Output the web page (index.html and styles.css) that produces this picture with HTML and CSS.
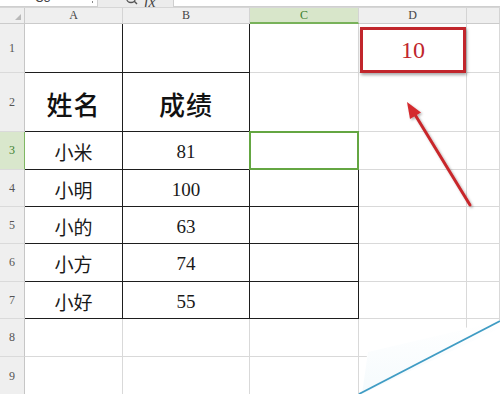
FILE: index.html
```html
<!DOCTYPE html>
<html lang="zh">
<head>
<meta charset="utf-8">
<link rel="stylesheet" href="styles.css">
</head>
<body>
<div class="page">
  <div class="toolbar">
    <div class="namebox"><span class="nb-text">C3</span><span class="nb-arrow"></span></div>
    <div class="fxarea">
      <svg class="mag" width="12" height="8" viewBox="0 0 12 8"><circle cx="5" cy="-1" r="4.5" fill="none" stroke="#555" stroke-width="1.3"/><line x1="8" y1="2" x2="11" y2="5" stroke="#555" stroke-width="1.4"/></svg>
      <span class="fx">fx</span>
    </div>
    <div class="formula"></div>
  </div>
  <div class="sheet">
    <div class="corner"><span class="tri"></span></div>
    <div class="hd">A</div>
    <div class="hd">B</div>
    <div class="hd sel">C</div>
    <div class="hd">D</div>
    <div class="hd"></div>

    <div class="rh">1</div>
    <div class="c t"></div>
    <div class="c t"></div>
    <div class="c"></div>
    <div class="c mark"><div class="redbox">10</div></div>
    <div class="c"></div>

    <div class="rh">2</div>
    <div class="c t big">姓名</div>
    <div class="c t big">成绩</div>
    <div class="c"></div>
    <div class="c"></div>
    <div class="c"></div>

    <div class="rh sel">3</div>
    <div class="c t cjk">小米</div>
    <div class="c t num">81</div>
    <div class="c t active"></div>
    <div class="c"></div>
    <div class="c"></div>

    <div class="rh">4</div>
    <div class="c t cjk">小明</div>
    <div class="c t num">100</div>
    <div class="c t"></div>
    <div class="c"></div>
    <div class="c"></div>

    <div class="rh">5</div>
    <div class="c t cjk">小的</div>
    <div class="c t num">63</div>
    <div class="c t"></div>
    <div class="c"></div>
    <div class="c"></div>

    <div class="rh">6</div>
    <div class="c t cjk">小方</div>
    <div class="c t num">74</div>
    <div class="c t"></div>
    <div class="c"></div>
    <div class="c"></div>

    <div class="rh">7</div>
    <div class="c t cjk">小好</div>
    <div class="c t num">55</div>
    <div class="c t"></div>
    <div class="c"></div>
    <div class="c"></div>

    <div class="rh">8</div>
    <div class="c"></div>
    <div class="c"></div>
    <div class="c"></div>
    <div class="c"></div>
    <div class="c"></div>

    <div class="rh">9</div>
    <div class="c"></div>
    <div class="c"></div>
    <div class="c"></div>
    <div class="c"></div>
    <div class="c"></div>
  </div>
  <svg class="overlay" width="500" height="394" viewBox="0 0 500 394">
    <defs>
      <filter id="sh" x="-20%" y="-20%" width="140%" height="140%">
        <feDropShadow dx="1.5" dy="1.5" stdDeviation="1.2" flood-color="#000" flood-opacity="0.3"/>
      </filter>
      <linearGradient id="fade" x1="0" y1="0" x2="0" y2="1">
        <stop offset="0" stop-color="#ffffff"/>
        <stop offset="1" stop-color="#eef7fb"/>
      </linearGradient>
    </defs>
    <g filter="url(#sh)">
      <line x1="470" y1="205" x2="414" y2="113" stroke="#c8282c" stroke-width="3" stroke-linecap="round"/>
      <polygon points="407,102 421,112.5 410,119" fill="#d42a2e"/>
    </g>
    <polygon points="368,350 500,320 500,394 360,394" fill="#ffffff"/>
    <polygon points="368,352 500,321 500,328 362,394" fill="url(#fade)" opacity="0.6"/>
    <line x1="359" y1="394" x2="500" y2="321" stroke="#3f9cc4" stroke-width="1.8"/>
  </svg>
</div>
</body>
</html>
```
FILE: styles.css
```css
html, body {
  margin: 0;
  padding: 0;
  background: #ffffff;
}
.page {
  position: relative;
  width: 500px;
  height: 394px;
  overflow: hidden;
  font-family: "Liberation Serif", serif;
}
.toolbar {
  display: flex;
  height: 8px;
  background: #ececec;
  box-sizing: border-box;
  border-bottom: 1px solid #d6d6d6;
}
.namebox {
  position: relative;
  width: 97px;
  height: 6px;
  background: #fff;
  border-right: 1px solid #cfcfcf;
  border-bottom: 1px solid #cfcfcf;
  overflow: hidden;
}
.nb-text {
  display: block;
  margin-left: 35px;
  margin-top: -9px;
  font-family: "Liberation Sans", sans-serif;
  font-size: 12px;
  line-height: 14px;
  color: #444;
}
.nb-arrow {
  position: absolute;
  right: 4px;
  top: 1px;
  width: 1px;
  height: 2px;
  background: #888;
}
.fxarea {
  width: 75px;
  height: 7px;
  display: flex;
  align-items: flex-end;
  gap: 6px;
  padding-left: 28px;
  box-sizing: border-box;
  overflow: hidden;
}
.mag {
  display: block;
  flex: none;
}
.fx {
  display: block;
  font-style: italic;
  font-size: 16px;
  line-height: 10px;
  color: #444;
}
.formula {
  flex: 1;
  height: 6px;
  background: #fff;
  border-left: 1px solid #cfcfcf;
  border-bottom: 1px solid #cfcfcf;
}
.sheet {
  display: grid;
  grid-template-columns: 25px 98px 127px 109px 108px 33px;
  grid-template-rows: 16px 49px 59px 38px 37px 37px 38px 37px 38px 40px;
}
.sheet > div {
  box-sizing: border-box;
}
.corner {
  position: relative;
  background: #efefef;
  border-right: 1px solid #cbcbcb;
  border-bottom: 1px solid #cbcbcb;
}
.tri {
  position: absolute;
  right: 3px;
  bottom: 3px;
  width: 0;
  height: 0;
  border-left: 6px solid transparent;
  border-bottom: 6px solid #b9b9b9;
}
.hd {
  background: #efefef;
  border-right: 1px solid #d4d4d4;
  border-bottom: 1px solid #cbcbcb;
  display: flex;
  align-items: center;
  justify-content: center;
  font-size: 12px;
  color: #444;
}
.hd.sel {
  background: #d8e6ca;
  border-bottom: 2px solid #78b25a;
  color: #3c7f2c;
}
.rh {
  background: #efefef;
  border-right: 1px solid #c6c6c6;
  border-bottom: 1px solid #dadada;
  display: flex;
  align-items: center;
  justify-content: center;
  font-size: 12px;
  color: #555;
}
.rh.sel {
  background: #d9e7cc;
  border-right: 1px solid #7fb763;
  color: #3c7f2c;
}
.c {
  background: #fff;
  border-right: 1px solid #d9d9d9;
  border-bottom: 1px solid #d9d9d9;
  display: flex;
  align-items: center;
  justify-content: center;
  color: #111;
}
.c.t {
  border-right-color: #1e1e1e;
  border-bottom-color: #1e1e1e;
}
.big {
  font-family: "Noto Sans CJK SC", sans-serif;
  font-size: 26px;
  font-weight: 500;
  letter-spacing: 1px;
  padding-top: 2px;
}
.cjk {
  font-family: "Noto Sans CJK SC", sans-serif;
  font-size: 19px;
  font-weight: 400;
  color: #1a1a1a;
  padding-top: 2px;
}
.num {
  font-family: "Liberation Serif", serif;
  font-size: 19px;
  color: #1a1a1a;
  padding-top: 3px;
}
.active {
  position: relative;
}
.active::after {
  content: "";
  position: absolute;
  left: -1px;
  top: -1px;
  right: -1px;
  bottom: -1px;
  border: 2px solid #64a642;
}
.mark {
  position: relative;
}
.redbox {
  position: absolute;
  left: 1px;
  top: 3px;
  right: 0;
  bottom: -1px;
  border: 3px solid #c1262c;
  box-shadow: 1px 2px 3px rgba(0,0,0,0.35);
  display: flex;
  align-items: center;
  justify-content: center;
  font-family: "Liberation Serif", serif;
  font-size: 24px;
  color: #c0262c;
  background: #fff;
}
.overlay {
  position: absolute;
  left: 0;
  top: 0;
  pointer-events: none;
}
```
